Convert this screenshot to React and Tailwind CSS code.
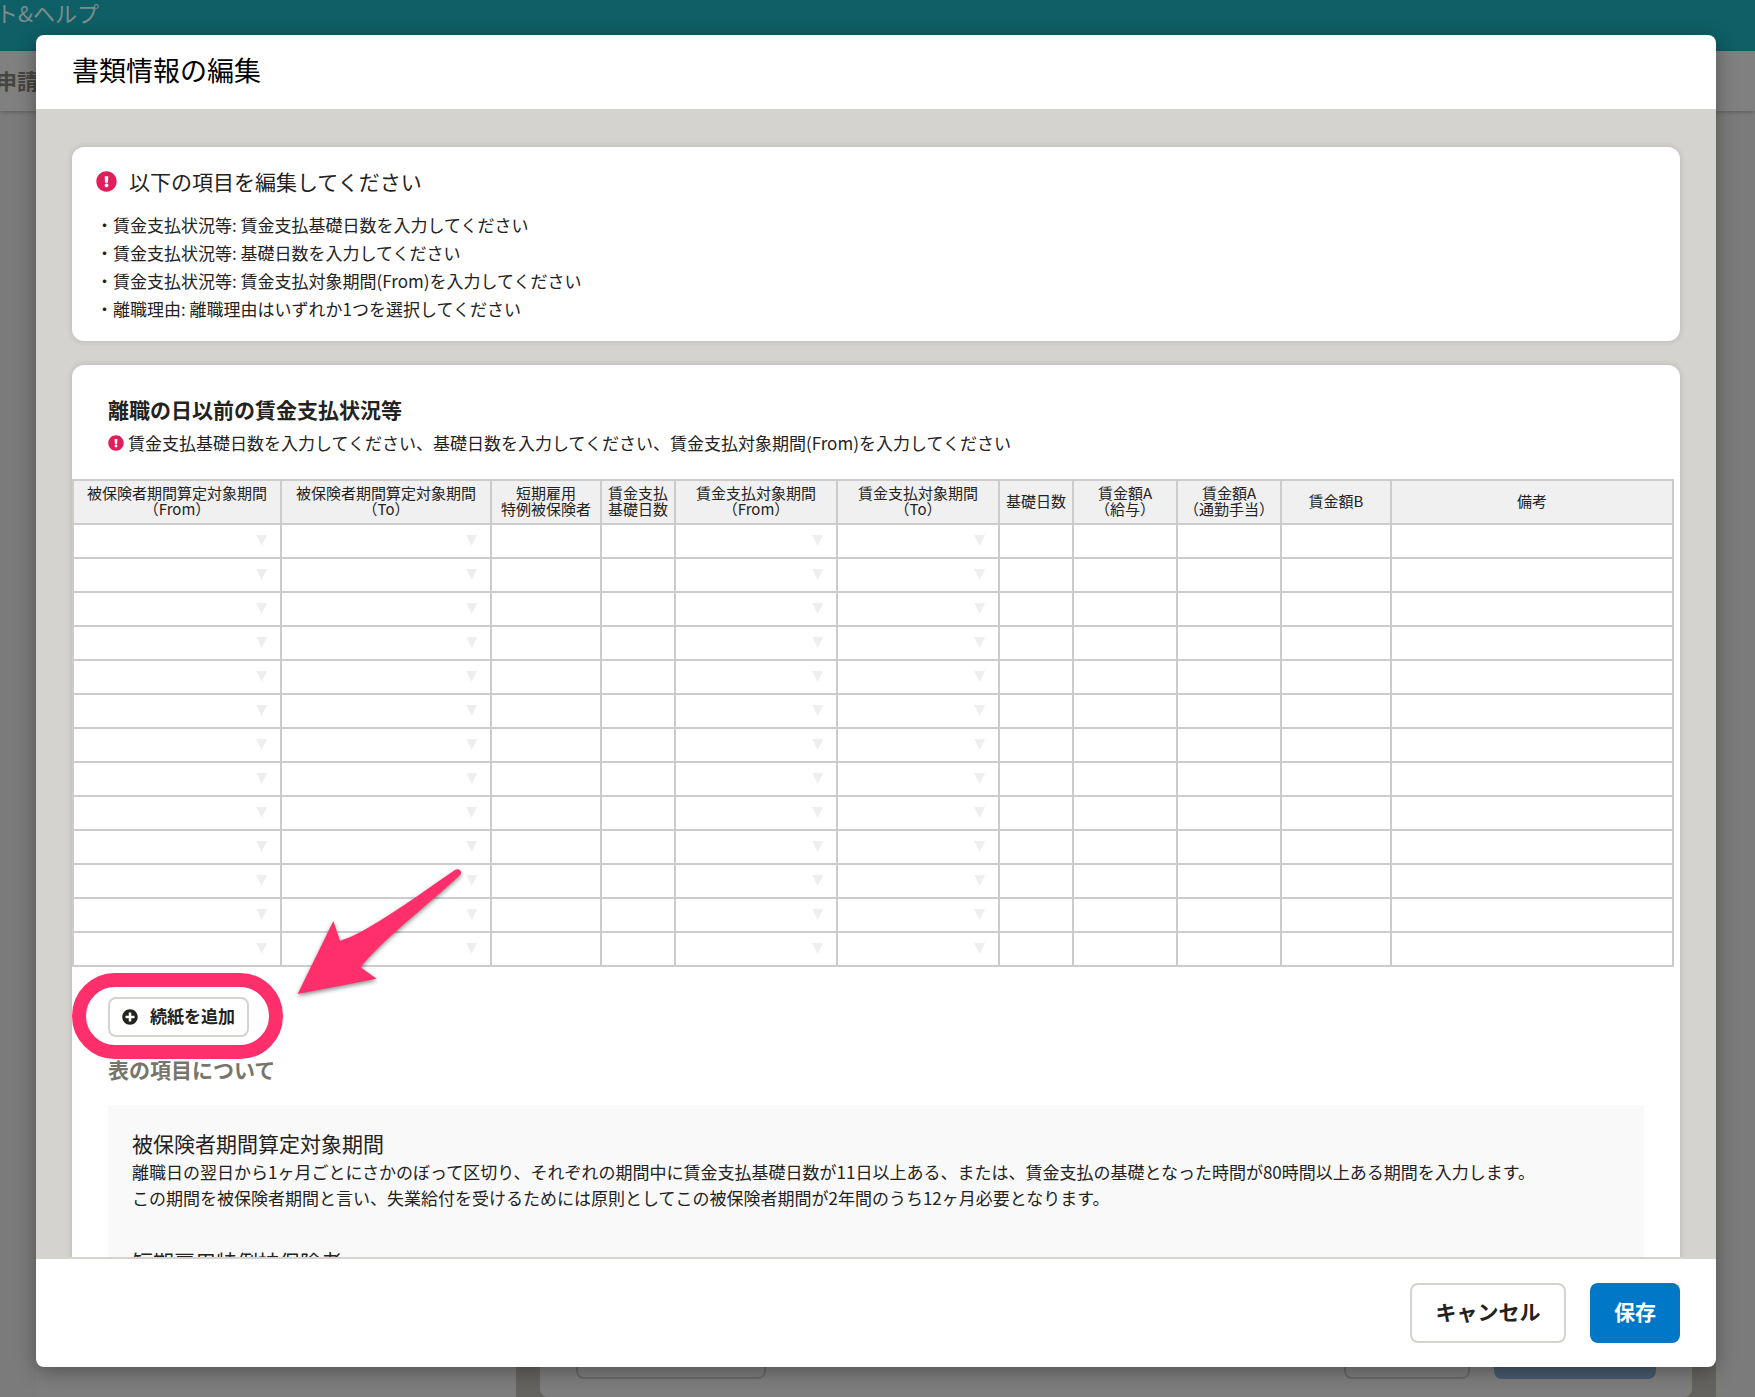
import React from "react";
import { FaExclamationCircle, FaPlusCircle } from "react-icons/fa";

const columns = [
  { lines: ["被保険者期間算定対象期間", "（From）"], width: "w-[208px]", menu: true },
  { lines: ["被保険者期間算定対象期間", "（To）"], width: "w-[210px]", menu: true },
  { lines: ["短期雇用", "特例被保険者"], width: "w-[110px]" },
  { lines: ["賃金支払", "基礎日数"], width: "w-[74px]" },
  { lines: ["賃金支払対象期間", "（From）"], width: "w-[162px]", menu: true },
  { lines: ["賃金支払対象期間", "（To）"], width: "w-[162px]", menu: true },
  { lines: ["基礎日数"], width: "w-[74px]" },
  { lines: ["賃金額A", "（給与）"], width: "w-[104px]" },
  { lines: ["賃金額A", "（通勤手当）"], width: "w-[104px]" },
  { lines: ["賃金額B"], width: "w-[110px]" },
  { lines: ["備考"], width: "" },
];

const errors = [
  "賃金支払状況等: 賃金支払基礎日数を入力してください",
  "賃金支払状況等: 基礎日数を入力してください",
  "賃金支払状況等: 賃金支払対象期間(From)を入力してください",
  "離職理由: 離職理由はいずれか1つを選択してください",
];

function Backdrop() {
  return (
    <div className="flex h-full flex-col bg-[#7b7b7b]" aria-hidden="true">
      <div className="h-[51px] shrink-0 bg-[#0e6066]">
        <p className="-ml-1 text-[22px] leading-6 text-[#808c8c]">ト&amp;ヘルプ</p>
      </div>
      <div className="flex h-[60px] shrink-0 items-center bg-[#808080] shadow-[0_1px_4px_rgba(0,0,0,0.25)]">
        <p className="-ml-1 text-[21px] font-bold text-[#45443f]">申請</p>
      </div>
      <div className="mr-[39px] ml-9 flex flex-1 gap-6 bg-[#65635f] pr-6">
        <div className="w-[480px] shrink-0 bg-[#7d7d7d]" />
        <div className="flex flex-1 items-end gap-6 rounded-b-lg bg-[#7d7d7d] px-9 pb-[18px]">
          <div className="mr-auto h-[60px] w-[190px] rounded-lg border-2 border-[#696967]" />
          <div className="h-[60px] w-[126px] rounded-lg border-2 border-[#696967]" />
          <div className="h-[60px] w-[162px] rounded-lg bg-[#475a6d]" />
        </div>
      </div>
    </div>
  );
}

function WageTable() {
  return (
    <table className="mt-[22px] w-[calc(100%-6px)] table-fixed border-collapse border-2 border-[#cccccc] text-[15px]">
      <thead>
        <tr className="h-11 bg-[#f0f0f0]">
          {columns.map((c, i) => (
            <th
              key={i}
              scope="col"
              className={`border-2 border-[#cccccc] p-0 pb-0.5 text-center font-normal leading-4 whitespace-nowrap ${c.width}`}
            >
              {c.lines.map((l) => (
                <span key={l} className="block">
                  {l}
                </span>
              ))}
            </th>
          ))}
        </tr>
      </thead>
      <tbody>
        {Array.from({ length: 13 }, (_, r) => (
          <tr key={r} className="h-[34px]">
            {columns.map((c, i) => (
              <td key={i} className="border-2 border-[#cccccc] p-0 pb-1">
                {c.menu && (
                  <button
                    type="button"
                    aria-label={c.lines.join("")}
                    className="ml-auto block pr-[13px] font-['DejaVu_Sans'] text-[14px] leading-5 text-[#eeeeee]"
                  >
                    ▼
                  </button>
                )}
              </td>
            ))}
          </tr>
        ))}
      </tbody>
    </table>
  );
}

function Callout() {
  return (
    <>
      <div className="pointer-events-none absolute -top-6 -left-9 h-[86px] w-[211px] rounded-full border-[14px] border-[#ff2f6c]" />
      <svg
        className="pointer-events-none absolute -top-[130px] left-[187px] h-[132px] w-[170px] overflow-visible drop-shadow-[0_2px_2px_rgba(0,0,0,0.45)]"
        viewBox="735 81 510 396"
        aria-hidden="true"
      >
        <path
          fill="#ff2f6c"
          d="M743 462 L850 243 L870 302 C935 286 1075 187 1215 90 C1226 83 1238 93 1231 104 C1130 198 985 310 932 382 L980 416 Z"
        />
      </svg>
    </>
  );
}

export default function App() {
  return (
    <div className="relative h-screen overflow-hidden font-['Noto_Sans_CJK_JP',sans-serif] text-[#23221e]">
      <Backdrop />
      <div className="absolute inset-0 flex pt-[35px] pr-[39px] pb-[30px] pl-9">
        <div
          role="dialog"
          aria-labelledby="dialog-title"
          className="flex min-w-0 flex-1 flex-col overflow-hidden rounded-lg bg-white shadow-[0_4px_20px_rgba(0,0,0,0.35)]"
        >
          <header className="flex h-[74px] shrink-0 items-center px-9 pb-1">
            <h1 id="dialog-title" className="text-[27px] leading-9 text-black">
              書類情報の編集
            </h1>
          </header>

          <main className="min-h-0 flex-1 overflow-hidden bg-[#d4d3cf] px-9 pt-[38px]">
            <section className="rounded-xl bg-white px-6 pt-5 pb-[18px] shadow-[0_0_6px_rgba(0,0,0,0.15)]">
              <h2 className="flex items-center gap-3 text-[21px] leading-7">
                <FaExclamationCircle className="size-[21px] text-[#e01e5a]" />
                以下の項目を編集してください
              </h2>
              <ul className="mt-4 text-[17px] leading-7">
                {errors.map((e) => (
                  <li key={e}>・{e}</li>
                ))}
              </ul>
            </section>

            <section className="mt-6 rounded-t-xl bg-white pt-[30px] pb-9 shadow-[0_0_6px_rgba(0,0,0,0.15)]">
              <h2 className="px-9 text-[21px] leading-7 font-bold">離職の日以前の賃金支払状況等</h2>
              <p className="mt-1.5 flex items-center gap-1 px-9 text-[17px] leading-7">
                <FaExclamationCircle className="size-4 text-[#e01e5a]" />
                賃金支払基礎日数を入力してください、基礎日数を入力してください、賃金支払対象期間(From)を入力してください
              </p>

              <WageTable />

              <div className="px-9">
                <div className="relative mt-[30px] w-fit">
                  <button
                    type="button"
                    className="flex h-10 items-center gap-3 rounded-lg border-2 border-[#d4d3cf] bg-white px-3 text-[17px] font-bold"
                  >
                    <FaPlusCircle className="size-4" />
                    <span className="pb-0.5">続紙を追加</span>
                  </button>
                  <Callout />
                </div>

                <h3 className="mt-[18px] text-[21px] leading-7 font-bold text-[#77756b]">表の項目について</h3>
                <div className="mt-[22px] bg-[#f9f9f9] px-6 py-6">
                  <h4 className="text-[21px] leading-7">被保険者期間算定対象期間</h4>
                  <p className="mt-0.5 text-[17px] leading-[26px]">
                    離職日の翌日から1ヶ月ごとにさかのぼって区切り、それぞれの期間中に賃金支払基礎日数が11日以上ある、または、賃金支払の基礎となった時間が80時間以上ある期間を入力します。
                    <br />
                    この期間を被保険者期間と言い、失業給付を受けるためには原則としてこの被保険者期間が2年間のうち12ヶ月必要となります。
                  </p>
                  <h4 className="mt-9 text-[21px] leading-7">短期雇用特例被保険者</h4>
                </div>
              </div>
            </section>
          </main>

          <footer className="flex shrink-0 justify-end gap-6 border-t-2 border-[#d4d3cf] px-9 py-6 text-[21px] font-bold">
            <button type="button" className="h-[60px] w-39 rounded-lg border-2 border-[#d4d3cf] bg-white pb-0.5">
              キャンセル
            </button>
            <button type="button" className="h-[60px] rounded-lg bg-[#0077c7] px-6 pb-0.5 text-white">
              保存
            </button>
          </footer>
        </div>
      </div>
    </div>
  );
}
